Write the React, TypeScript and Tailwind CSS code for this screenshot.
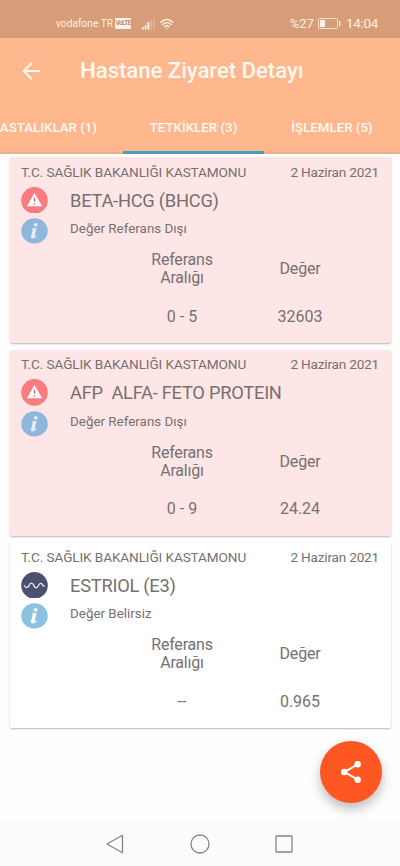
import React from "react";

type Result = {
  name: string;
  status: string;
  range: string;
  value: string;
  alert: boolean;
};

const results: Result[] = [
  { name: "BETA-HCG (BHCG)", status: "Değer Referans Dışı", range: "0 - 5", value: "32603", alert: true },
  { name: "AFP\u00a0 ALFA- FETO PROTEIN", status: "Değer Referans Dışı", range: "0 - 9", value: "24.24", alert: true },
  { name: "ESTRIOL (E3)", status: "Değer Belirsiz", range: "--", value: "0.965", alert: false },
];

function StatusBar() {
  return (
    <div className="flex h-[38px] shrink-0 items-center bg-[#d79c78] pt-[9px] pl-[56px] pr-[22px] text-[#fff1e4]">
      <span className="w-[59px] pt-px whitespace-nowrap text-[10.2px] leading-none">vodafone TR</span>
      <span className="flex h-[11px] w-[16px] items-center justify-center rounded-[1px] bg-[#fff4ea] text-[7px] font-bold leading-none tracking-[-0.9px] text-[#c58d6b]">
        VoLTE
      </span>
      <svg className="ml-[11px]" width="13" height="12" viewBox="0 0 13 12" fill="currentColor">
        <rect x="0" y="9" width="1.7" height="2.5" />
        <rect x="2.7" y="7.3" width="1.8" height="4.2" />
        <rect x="5.4" y="4" width="2" height="7.5" />
        <rect x="8.4" y="2" width="1.4" height="9.5" opacity=".35" />
        <rect x="11.2" y="0" width="1.2" height="11.5" opacity=".35" />
      </svg>
      <svg className="ml-[5px]" width="14" height="12" viewBox="0 0 14 12" fill="none" stroke="currentColor" strokeWidth="1.4" strokeLinecap="round">
        <path d="M.8 4.2C4.3.5 9.3.5 12.8 4.2M2.6 6.6c2.5-2.4 5.900-2.400 8.400 0M4.700 8.800c1.300-1.200 2.900-1.200 4.200 0" />
        <circle cx="6.800" cy="10.500" r=".8" fill="currentColor" stroke="none" />
      </svg>
      <span className="ml-auto text-[13px] leading-none">%27</span>
      <svg className="ml-[4px]" width="23" height="11" viewBox="0 0 23 11" fill="none">
        <rect x=".5" y=".5" width="19" height="10" rx="1" stroke="currentColor" strokeWidth=".8" />
        <rect x="2" y="2" width="5" height="7" fill="currentColor" />
        <rect x="21" y="3" width="1.500" height="5" fill="currentColor" />
      </svg>
      <span className="ml-[5px] text-[13.500px] tracking-[-0.300px] leading-none">14:04</span>
    </div>
  );
}

function Tabs() {
  return (
    <div className="flex h-[51px] shrink-0 text-[13.300px] font-medium leading-none text-[#fffaf2]">
      <div className="flex w-[123px] items-center justify-end whitespace-nowrap border-b-2 border-[#eeaf87] pr-[26px]">
        <span>ASTALIKLAR (1)</span>
      </div>
      <div className="flex w-[141px] items-center justify-center border-b-[3px] border-[#4a9fb7] pt-px">
        <span>TETKİKLER (3)</span>
      </div>
      <div className="flex w-[136px] items-center justify-center border-b-2 border-[#eeaf87]">
        <span>İŞLEMLER (5)</span>
      </div>
    </div>
  );
}

function StateIcon({ alert }: { alert: boolean }) {
  return alert ? (
    <svg width="27" height="27" viewBox="0 0 27 27">
      <circle cx="13.500" cy="13.500" r="13.400" fill="#fb7c80" />
      <path d="M13.500 6.500 20.700 19.200H6.300Z" fill="#fff" stroke="#fff" strokeWidth=".6" strokeLinejoin="round" />
      <path d="M13.500 10.700v4.100M13.500 16.200v1.500" stroke="#f2676d" strokeWidth="1.300" />
    </svg>
  ) : (
    <svg width="27" height="27" viewBox="0 0 27 27">
      <circle cx="13.500" cy="13.500" r="13.400" fill="#4b506f" />
      <path d="M3.400 14C4.400 16.400 6.600 16.300 7.800 14C9.200 10.500 11.400 10.500 12.800 13.500C14.200 16.800 16.100 16.700 17.400 13.900C18.800 10.800 20.600 10.700 21.700 13C22.300 14.200 22.900 14.600 23.600 14" fill="none" stroke="#e6e9f4" strokeWidth="1.300" strokeLinecap="round" />
    </svg>
  );
}

function InfoIcon({ alert }: { alert: boolean }) {
  return (
    <svg width="27" height="26" viewBox="0 0 27 26">
      <ellipse cx="13.500" cy="13" rx="13.400" ry="12.800" fill={alert ? "#8eb7db" : "#8bc1e3"} />
      <g fill={alert ? "#e9edf6" : "#fff"}>
        <circle cx="14.700" cy="6.900" r="1.900" />
        <path d="M10.600 10.300h5l-2 7.500c-.2.900.4.800 1.900-.4l.4.600c-1.400 1.900-3 2.700-4.400 2.600-1.400-.1-1.800-1-1.500-2.200l1.600-6c.2-.9-.1-1.100-1.200-1.200Z" />
      </g>
    </svg>
  );
}

function ResultCard({ result }: { result: Result }) {
  return (
    <section
      className={`flex h-[186px] flex-col rounded-[2px] pt-[3px] shadow-[0_1px_2px_rgba(0,0,0,0.28)] ${result.alert ? "bg-[#fee6e6]" : "bg-white"}`}
    >
      <div className="flex h-[25px] shrink-0 items-center justify-between pl-[11.500px] pr-[11.500px] text-[13.600px] tracking-[-0.110px] leading-none whitespace-nowrap">
        <span>T.C. SAĞLIK BAKANLIĞI KASTAMONU</span>
        <span className="tracking-[-0.200px]">2 Haziran 2021</span>
      </div>
      <div className="flex h-[59px] shrink-0 pt-[1.500px] pl-[11.500px]">
        <div className="flex w-[49px] flex-col gap-[5px]">
          <StateIcon alert={result.alert} />
          <InfoIcon alert={result.alert} />
        </div>
        <div className="flex flex-col whitespace-nowrap">
          <span className="flex h-[29px] items-center text-[18.300px] leading-none tracking-[-0.250px]">{result.name}</span>
          <span className="flex h-[27px] items-center text-[13.400px] leading-none">{result.status}</span>
        </div>
      </div>
      <div className="ml-[113.500px] grid w-[236px] grid-cols-2 text-center text-[16px] leading-[18px]">
        <div className="flex h-[50px] items-center justify-center tracking-[-0.200px]">
          <span>Referans<br />Aralığı</span>
        </div>
        <div className="flex h-[50px] items-center justify-center tracking-[-0.200px]">Değer</div>
        <div className="flex h-[45px] items-center justify-center">{result.range}</div>
        <div className="flex h-[45px] items-center justify-center">{result.value}</div>
      </div>
    </section>
  );
}

function NavBar() {
  return (
    <nav className="flex h-[45px] shrink-0 items-center justify-center gap-[64px] bg-[#fbfbfb] pr-[1.500px] text-[#858585]">
      <svg width="22" height="22" viewBox="0 0 22 22" fill="none" stroke="currentColor" strokeWidth="1.300" strokeLinejoin="round">
        <path d="M18.500 2.200v17.600L3 11Z" />
      </svg>
      <svg width="20" height="20" viewBox="0 0 20 20" fill="none" stroke="currentColor" strokeWidth="1.300">
        <circle cx="10" cy="10" r="9" />
      </svg>
      <svg width="20" height="20" viewBox="0 0 20 20" fill="none" stroke="currentColor" strokeWidth="1.300">
        <rect x="2" y="2" width="16" height="16" rx=".8" />
      </svg>
    </nav>
  );
}

export default function App() {
  return (
    <div className="relative flex h-[866px] w-[400px] flex-col overflow-hidden bg-[#fefefe] font-['Roboto',sans-serif] text-[#777070]">
      <StatusBar />
      <header className="flex h-[116px] shrink-0 flex-col bg-[#ffb78d]">
        <div className="flex h-[65px] items-center pl-[22px] text-[#fff8f0]">
          <svg width="19" height="18" viewBox="0 0 19 18" fill="none" stroke="currentColor" strokeWidth="2">
            <path d="M18 9H2M10 .8 1.800 9 10 17.200" />
          </svg>
          <h1 className="ml-[39px] text-[22.300px] font-medium leading-none tracking-[-0.100px]">Hastane Ziyaret Detayı</h1>
        </div>
        <Tabs />
      </header>
      <main className="flex flex-1 flex-col gap-[6.600px] px-[9.500px] pt-[3px]">
        {results.map((result) => (
          <ResultCard key={result.name} result={result} />
        ))}
      </main>
      <NavBar />
      <button className="absolute top-[741px] left-[320px] flex h-[62px] w-[62px] items-center justify-center rounded-full bg-[#ff5722] shadow-[0_6px_12px_rgba(0,0,0,0.26)]">
        <svg width="22" height="24" viewBox="0 0 22 24" fill="#fff">
          <path d="M18 4.200 4.500 12 18 19.800" fill="none" stroke="#fff" strokeWidth="2" />
          <circle cx="17.700" cy="4.200" r="3.200" />
          <circle cx="4.300" cy="12" r="3.300" />
          <circle cx="17.700" cy="19.800" r="3.200" />
        </svg>
      </button>
    </div>
  );
}
